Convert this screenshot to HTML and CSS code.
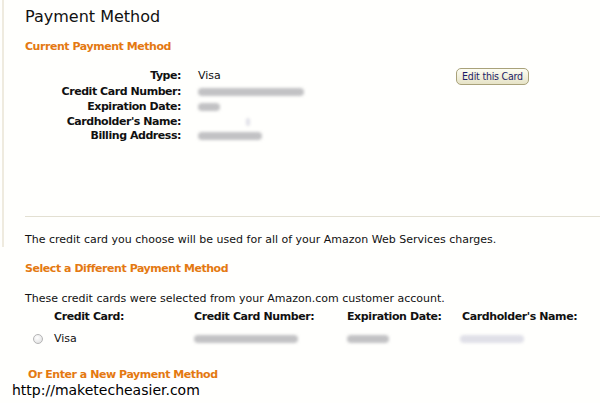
FILE: index.html
```html
<!DOCTYPE html>
<html>
<head>
    <title>Payment Method</title>
    <link rel="stylesheet" href="styles.css">
</head>
<body>
    <div class="panel">
        <h1>Payment Method</h1>
        <h2>Current Payment Method</h2>
        <div class="current">
            <span class="label">Type:</span>
            <span class="value">Visa</span>
            <button class="edit-btn">Edit this Card</button>
            <span class="label">Credit Card Number:</span>
            <span class="value"><i class="blur" style="width:106px"></i></span>
            <span></span>
            <span class="label">Expiration Date:</span>
            <span class="value"><i class="blur" style="width:22px"></i></span>
            <span></span>
            <span class="label">Cardholder's Name:</span>
            <span class="value"><i class="blur faint" style="width:4px;margin-left:48px"></i></span>
            <span></span>
            <span class="label">Billing Address:</span>
            <span class="value"><i class="blur" style="width:64px"></i></span>
            <span></span>
        </div>
        <hr>
        <p>The credit card you choose will be used for all of your Amazon Web Services charges.</p>
    </div>

    <div class="main">
        <h2>Select a Different Payment Method</h2>
        <p class="note">These credit cards were selected from your Amazon.com customer account.</p>
        <div class="cards">
            <span></span>
            <span class="head">Credit Card:</span>
            <span class="head">Credit Card Number:</span>
            <span class="head">Expiration Date:</span>
            <span class="head">Cardholder's Name:</span>
            <span class="radio"></span>
            <span>Visa</span>
            <span><i class="blur" style="width:104px"></i></span>
            <span><i class="blur" style="width:42px"></i></span>
            <span><i class="blur faint" style="width:64px;margin-left:-2px"></i></span>
        </div>
        <h2 class="new">Or Enter a New Payment Method</h2>
    </div>

    <div class="watermark">http://maketecheasier.com</div>
</body>
</html>
```

FILE: styles.css
```css
body {
    margin: 0;
    background: #fffffd;
    font-family: "DejaVu Sans", Verdana, sans-serif;
    font-size: 11px;
    line-height: 15px;
    color: #111;
    position: relative;
    height: 403px;
    overflow: hidden;
}
.panel {
    border-left: 2px solid #efebdf;
    margin-left: 2px;
    padding: 6px 0 0 21px;
}
h1 {
    margin: 0;
    font-size: 16px;
    line-height: 22px;
    font-weight: normal;
    color: #111;
}
h2 {
    margin: 0;
    font-size: 11px;
    line-height: 15px;
    letter-spacing: -0.45px;
    color: #e47911;
}
.panel h2 {
    margin-top: 11px;
}
.current {
    display: grid;
    grid-template-columns: 156px 241px auto;
    column-gap: 17px;
    margin-top: 14px;
    line-height: 14.75px;
    align-items: center;
}
.label {
    font-weight: bold;
    letter-spacing: -0.45px;
    text-align: right;
}
.edit-btn {
    justify-self: start;
    width: 73px;
    height: 17px;
    padding: 0;
    border: 1px solid #a9a27a;
    border-radius: 5px;
    background: linear-gradient(#fdfdf3, #e6e3c6);
    font-family: "DejaVu Sans Condensed", Tahoma, sans-serif;
    font-size: 10.5px;
    line-height: 15px;
    letter-spacing: -0.2px;
    color: #1c1c66;
}
.blur {
    display: inline-block;
    height: 8px;
    border-radius: 4px;
    background: #c2c2c4;
    filter: blur(1.5px);
    vertical-align: middle;
}
.blur.faint {
    background: #e0e0e8;
}
hr {
    border: 0;
    border-top: 1px solid #e3e0d2;
    margin: 72px 0 0;
}
p {
    margin: 15px 0 0;
}
.main {
    padding-left: 25px;
}
.main h2 {
    margin-top: 14px;
}
.note {
    margin-top: 15px;
}
.cards {
    display: grid;
    grid-template-columns: 29px 140px 153px 115px auto;
    row-gap: 7px;
    margin-top: 3px;
    align-items: center;
}
.head {
    font-weight: bold;
    letter-spacing: -0.4px;
}
.radio {
    width: 8px;
    height: 8px;
    margin-left: 8px;
    border: 1px solid #b5b5b5;
    border-radius: 50%;
    background: radial-gradient(circle at 40% 35%, #fff, #dcdcdc);
}
.main .new {
    margin: 21px 0 0 3px;
}
.watermark {
    position: absolute;
    left: 12px;
    top: 381px;
    font-size: 14px;
    line-height: 18px;
    color: #000;
    background: #fff;
}
```
